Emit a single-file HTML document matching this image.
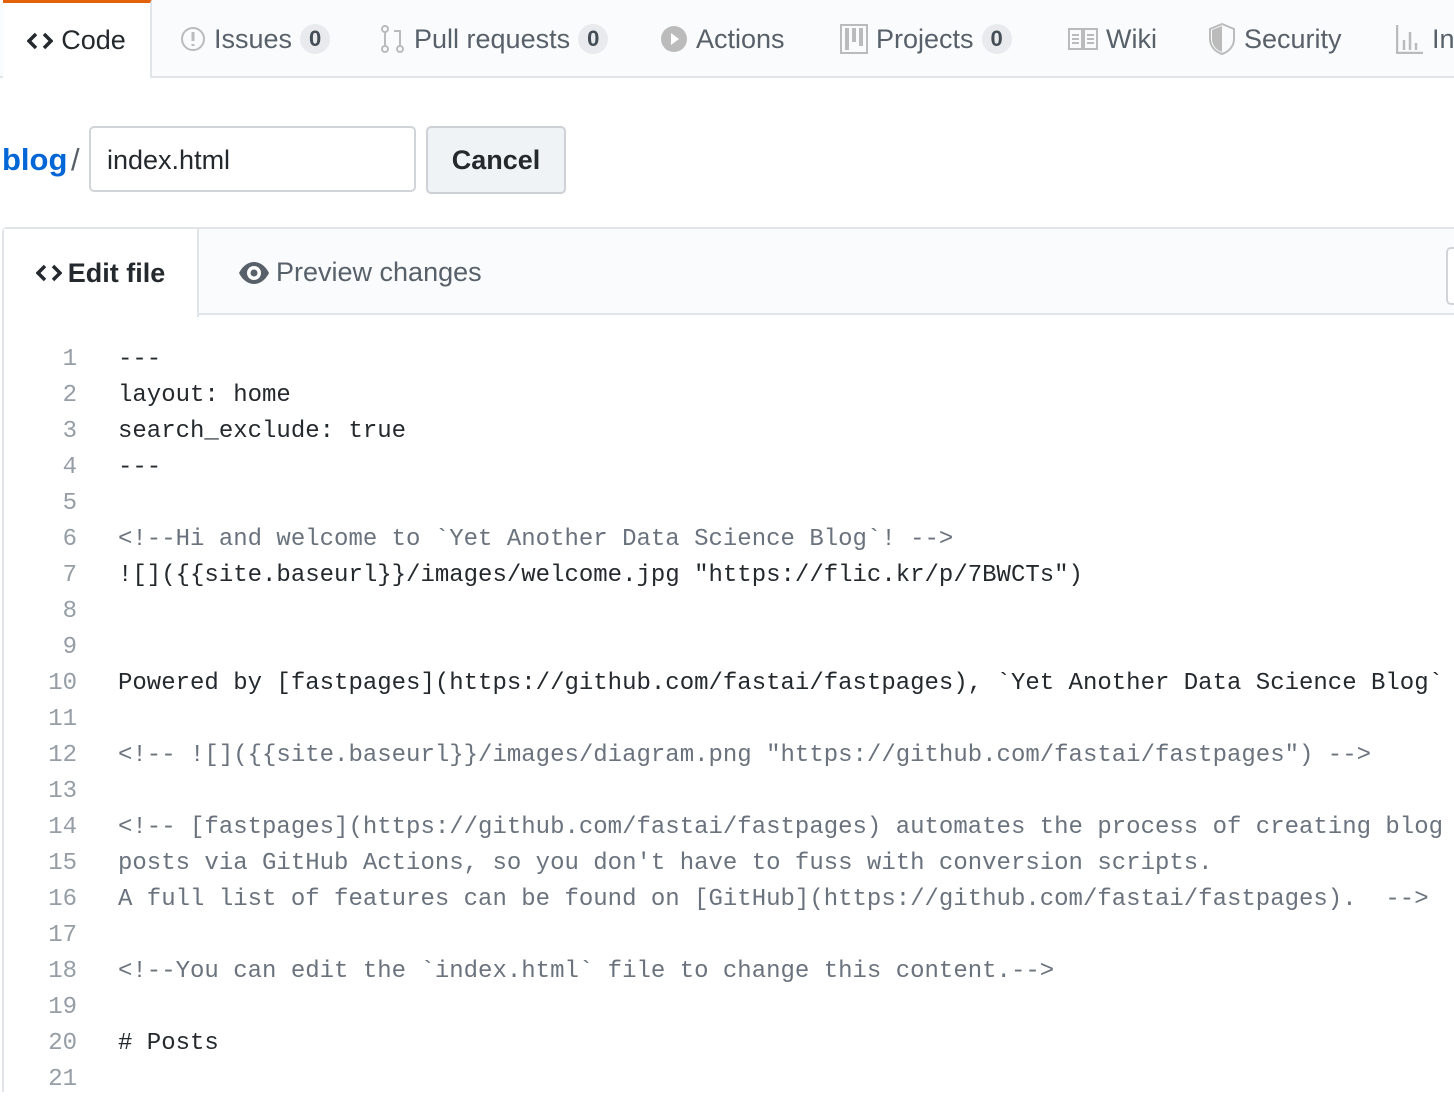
<!DOCTYPE html>
<html><head><style>
body{margin:0;width:1454px;height:1092px;overflow:hidden;background:#fff;font-family:"Liberation Sans",sans-serif;color:#24292e;position:relative}
.nav{position:absolute;left:0;top:0;width:1454px;height:76px;background:#fafbfc;border-bottom:2px solid #e1e4e8}
.tab{position:absolute;top:0;height:78px;display:flex;align-items:center;font-size:27px;color:#586069;white-space:nowrap}
.tab svg{margin-right:8px}
.cnt{display:inline-block;background:#e8eaed;border-radius:16px;padding:2px 9px;font-size:22px;font-weight:bold;color:#444d56;margin-left:8px}
.sel{left:3px;width:149px;background:#fff;border-right:2px solid #e1e4e8;border-top:4px solid #e36209;top:-1px;height:79px;justify-content:center;color:#24292e;box-sizing:border-box}
.code{position:absolute;left:0;top:342px;width:1454px;height:756px;font-family:"Liberation Mono",monospace;font-size:24px;line-height:36px;white-space:pre}
.ln{position:absolute;left:0;top:0;width:77px;text-align:right;color:#959da5}
.tx{position:absolute;left:118px;top:0}
.c{color:#6a737d}
</style></head><body>
<div class="nav">
<div class="tab sel"><svg width="26" height="20" viewBox="0 0 26 20"><path d="M9 3L2 10l7 7M17 3l7 7-7 7" stroke="#24292e" stroke-width="3.5" fill="none"/></svg>Code</div>
<div class="tab" style="left:180px"><svg width="26" height="26" viewBox="0 0 26 26"><circle cx="13" cy="13" r="11" stroke="#bbb" stroke-width="2" fill="none"/><path d="M13 6v9M13 18v2" stroke="#bbb" stroke-width="3"/></svg>Issues<span class="cnt">0</span></div>
<div class="tab" style="left:380px"><svg width="26" height="28" viewBox="0 0 26 28"><circle cx="5" cy="4" r="3" stroke="#bbb" stroke-width="2" fill="none"/><circle cx="5" cy="24" r="3" stroke="#bbb" stroke-width="2" fill="none"/><circle cx="20" cy="24" r="3" stroke="#bbb" stroke-width="2" fill="none"/><path d="M5 7v14M20 21V6h-6" stroke="#bbb" stroke-width="2" fill="none"/></svg>Pull requests<span class="cnt">0</span></div>
<div class="tab" style="left:660px"><svg width="28" height="28" viewBox="0 0 28 28"><circle cx="14" cy="14" r="13" fill="#bbb"/><path d="M11 8l8 6-8 6z" fill="#fff"/></svg>Actions</div>
<div class="tab" style="left:840px"><svg width="28" height="30" viewBox="0 0 28 30"><rect x="1" y="1" width="26" height="28" stroke="#bbb" stroke-width="2" fill="none"/><rect x="5" y="4" width="4" height="22" fill="#bbb"/><rect x="12" y="4" width="4" height="14" fill="#bbb"/><rect x="19" y="4" width="4" height="18" fill="#bbb"/></svg>Projects<span class="cnt">0</span></div>
<div class="tab" style="left:1068px"><svg width="30" height="24" viewBox="0 0 30 24"><path d="M1 2h13v20H1zM16 2h13v20H16z" stroke="#bbb" stroke-width="2" fill="none"/><path d="M4 8h7M4 12h7M4 16h7M19 8h7M19 12h7M19 16h7" stroke="#bbb" stroke-width="2"/></svg>Wiki</div>
<div class="tab" style="left:1208px"><svg width="28" height="32" viewBox="0 0 28 32"><path d="M14 1L2 6v10c0 8 6 13 12 15 6-2 12-7 12-15V6z" stroke="#bbb" stroke-width="2" fill="none"/><path d="M14 3v26C8 27 4 22 4 16V7z" fill="#bbb"/></svg>Security</div>
<div class="tab" style="left:1396px"><svg width="28" height="30" viewBox="0 0 28 30"><path d="M1 1v28h26M8 26v-10M14 26V8M20 26v-7" stroke="#bbb" stroke-width="2.5" fill="none"/></svg>In</div>
</div>
<div style="position:absolute;left:2px;top:142px;font-size:31px;font-weight:bold;color:#0366d6">blog</div>
<div style="position:absolute;left:71px;top:142px;font-size:31px;color:#586069">/</div>
<div style="position:absolute;left:89px;top:126px;width:327px;height:66px;border:2px solid #d1d5da;border-radius:5px;box-sizing:border-box;font-size:27px;padding:17px 0 0 16px">index.html</div>
<div style="position:absolute;left:426px;top:126px;width:140px;height:68px;border:2px solid #cdd1d5;border-radius:5px;box-sizing:border-box;background:#eff3f6;font-size:27px;font-weight:bold;text-align:center;padding-top:17px">Cancel</div>
<div style="position:absolute;left:2px;top:227px;width:1460px;height:88px;border:2px solid #e1e4e8;box-sizing:border-box;background:#fafbfc;border-radius:5px 0 0 0"></div>
<div style="position:absolute;left:4px;top:229px;width:193px;height:88px;background:#fff;border-right:2px solid #e1e4e8;display:flex;align-items:center;justify-content:center;font-size:27px;font-weight:bold"><svg width="26" height="20" viewBox="0 0 26 20" style="margin-right:6px"><path d="M9 3L2 10l7 7M17 3l7 7-7 7" stroke="#24292e" stroke-width="3.5" fill="none"/></svg>Edit file</div>
<div style="position:absolute;left:238px;top:257px;font-size:27px;color:#586069;display:flex;align-items:center"><svg width="32" height="24" viewBox="0 0 32 24" style="margin-right:6px"><path d="M1 12C5 4 11 1 16 1s11 3 15 11c-4 8-10 11-15 11S5 20 1 12z" fill="#586069"/><circle cx="16" cy="12" r="7" fill="#fff"/><circle cx="16" cy="12" r="3.5" fill="#586069"/></svg>Preview changes</div>
<div style="position:absolute;left:1446px;top:247px;width:20px;height:54px;border:2px solid #d1d5da;border-radius:5px;background:#fff"></div>
<div style="position:absolute;left:2px;top:315px;width:2px;height:777px;background:#e1e4e8"></div>
<div class="code"><div class="ln">1<br>2<br>3<br>4<br>5<br>6<br>7<br>8<br>9<br>10<br>11<br>12<br>13<br>14<br>15<br>16<br>17<br>18<br>19<br>20<br>21</div><div class="tx">---
layout: home
search_exclude: true
---

<span class="c">&lt;!--Hi and welcome to `Yet Another Data Science Blog`! --&gt;</span>
![]({{site.baseurl}}/images/welcome.jpg "https://flic.kr/p/7BWCTs")


Powered by [fastpages](https://github.com/fastai/fastpages), `Yet Another Data Science Blog`

<span class="c">&lt;!-- ![]({{site.baseurl}}/images/diagram.png "https://github.com/fastai/fastpages") --&gt;</span>

<span class="c">&lt;!-- [fastpages](https://github.com/fastai/fastpages) automates the process of creating blog
posts via GitHub Actions, so you don't have to fuss with conversion scripts.
A full list of features can be found on [GitHub](https://github.com/fastai/fastpages).  --&gt;</span>

<span class="c">&lt;!--You can edit the `index.html` file to change this content.--&gt;</span>

# Posts</div></div>
</body></html>
